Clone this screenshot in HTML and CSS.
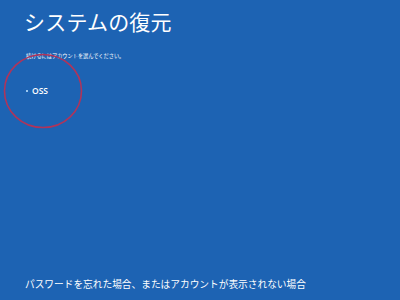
FILE: index.html
```html
<!DOCTYPE html>
<html lang="ja">
<head>
<meta charset="utf-8">
<link rel="stylesheet" href="styles.css">
</head>
<body>
<div class="screen">
  <h1 class="title">システムの復元</h1>
  <p class="subtitle">続けるにはアカウントを選んでください。</p>
  <ul class="accounts">
    <li class="account"><span class="dot"></span><span class="name">OSS</span></li>
  </ul>
  <div class="spacer"></div>
  <p class="help">パスワードを忘れた場合、またはアカウントが表示されない場合</p>
  <svg class="circle" width="90" height="84" viewBox="0 0 90 84">
    <ellipse cx="44" cy="38" rx="38.5" ry="36.5" fill="none" stroke="#b0345a" stroke-width="1.6"/>
  </svg>
</div>
</body>
</html>
```
FILE: styles.css
```css
html, body {
  margin: 0;
  padding: 0;
}
body {
  background: #1d63b3;
  font-family: "Noto Sans CJK JP", "Noto Sans", sans-serif;
  color: #ffffff;
}
.screen {
  position: relative;
  width: 400px;
  height: 300px;
  box-sizing: border-box;
  padding: 6px 0 7px 24px;
  display: flex;
  flex-direction: column;
  overflow: hidden;
}
.title {
  margin: 0;
  font-size: 21px;
  font-weight: 400;
  line-height: 30px;
  letter-spacing: 0.2px;
}
.subtitle {
  margin: 16px 0 0 2px;
  font-size: 5.2px;
  line-height: 8px;
}
.accounts {
  list-style: none;
  margin: 25px 0 0 0;
  padding: 0;
}
.account {
  display: flex;
  align-items: center;
  gap: 4px;
  height: 12px;
}
.dot {
  width: 2px;
  height: 2px;
  background: #9cc8f0;
  margin-left: 2px;
}
.name {
  font-family: "Open Sans", "Noto Sans", sans-serif;
  font-size: 8.5px;
  font-weight: 600;
  line-height: 12px;
}
.spacer {
  flex: 1;
}
.help {
  margin: 0 0 2px 1px;
  font-size: 9.7px;
  line-height: 14px;
}
.circle {
  position: absolute;
  left: -1px;
  top: 53px;
}
```
